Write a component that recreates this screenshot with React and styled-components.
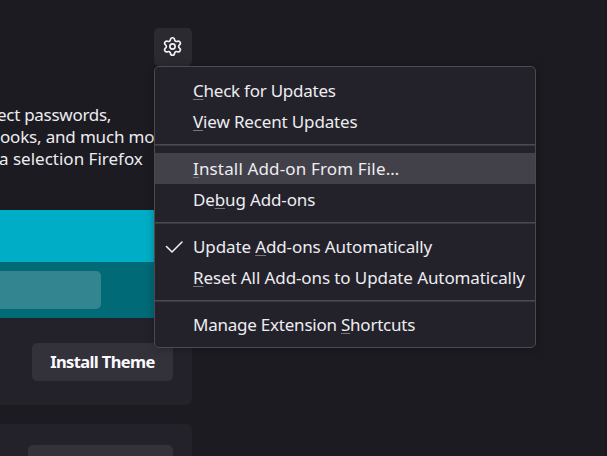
import React from "react";
import styled, { createGlobalStyle, css } from "styled-components";
import { Settings } from "lucide-react";

const GlobalStyle = createGlobalStyle`
  * { box-sizing: border-box; }
  body {
    margin: 0;
    background: #1c1b21;
    color: #ededf0;
    font-family: "Noto Sans", "Open Sans", sans-serif;
    overflow: hidden;
  }
`;

const Page = styled.main`
  position: relative;
  width: 607px;
  height: 456px;
  overflow: hidden;
  border-right: 2px solid #18171f;
`;

const Content = styled.div`
  width: 192px;
  height: 456px;
  display: flex;
  flex-direction: column;
  overflow: hidden;
`;

const GearButton = styled.button`
  align-self: flex-end;
  flex: none;
  width: 38px;
  height: 38px;
  margin-top: 28px;
  padding: 0 1px 1px 0;
  border: 0;
  border-radius: 5px;
  background: #2b2a31;
  color: #f2f2f5;
  display: grid;
  place-items: center;
`;

const Intro = styled.div`
  flex: none;
  margin-top: 38px;
  height: 106px;
`;

const IntroLine = styled.p`
  margin: 0 0 0 ${(p) => p.$shift}px;
  font-size: 17px;
  line-height: 22px;
  letter-spacing: ${(p) => p.$spacing || 0}px;
  white-space: nowrap;
`;

const Card = styled.section`
  flex: none;
  height: ${(p) => p.$height}px;
  margin-bottom: 19px;
  display: flex;
  flex-direction: column;
  align-items: flex-end;
  background: #23222b;
  border-radius: 0 6px 6px 0;
  overflow: hidden;
`;

const ThemePreview = styled.div`
  width: 100%;
  height: 108px;
  padding-top: 52px;
  background: #00adc6;
`;

const PreviewToolbar = styled.div`
  height: 56px;
  padding-top: 9px;
  background: #006a77;
`;

const PreviewField = styled.div`
  width: 101px;
  height: 38px;
  border-radius: 0 5px 5px 0;
  background: #33858f;
`;

const CardButton = styled.button`
  flex: none;
  width: ${(p) => p.$width}px;
  height: 38px;
  margin: ${(p) => p.$top}px 19px 0 0;
  padding: 0;
  border: 0;
  border-radius: 5px;
  background: #33323a;
  color: #fbfbfe;
  font: 700 16.5px/38px "Noto Sans", sans-serif;
  letter-spacing: -0.62px;
  white-space: nowrap;
`;

const Menu = styled.ul`
  position: absolute;
  left: 154px;
  top: 66px;
  width: 382px;
  height: 282px;
  margin: 0;
  padding: 8px 0 0;
  list-style: none;
  border: 1px solid #4b4a52;
  border-radius: 5px;
  background: #23222b;
  box-shadow: 0 1px 9px rgba(0, 0, 0, 0.28);
`;

const MenuItem = styled.li`
  height: 31.2px;
  display: grid;
  grid-template-columns: 38px 1fr;
  align-items: center;
  font-size: 17px;
  line-height: 31px;
  white-space: nowrap;
  letter-spacing: ${(p) => p.$spacing || 0}px;
  ${(p) => p.$active && css`background: #42414a;`}
`;

const Separator = styled.li`
  height: 1.6px;
  margin: 7px 0;
  background: linear-gradient(#4b4a52 1px, #393841 1px);
`;

const AccessKey = styled.span`
  text-decoration: underline 1px #77767d;
  text-underline-offset: 2px;
  text-decoration-skip-ink: none;
`;

const Check = styled.svg`
  display: block;
  margin-left: 10px;
`;

const groups = [
  [
    { text: ["", "C", "heck for Updates"], spacing: -0.24 },
    { text: ["", "V", "iew Recent Updates"], spacing: -0.15 },
  ],
  [
    { text: ["", "I", "nstall Add-on From File…"], spacing: 0.15, active: true },
    { text: ["De", "b", "ug Add-ons"], spacing: -0.14 },
  ],
  [
    { text: ["Update ", "A", "dd-ons Automatically"], spacing: -0.12, checked: true },
    { text: ["", "R", "eset All Add-ons to Update Automatically"], spacing: -0.1 },
  ],
  [{ text: ["Manage Extension ", "S", "hortcuts"], spacing: -0.23 }],
];

export default function App() {
  return (
    <>
      <GlobalStyle />
      <Page>
        <Content>
          <GearButton aria-label="Tools for all add-ons">
            <Settings size={21} strokeWidth={1.9} />
          </GearButton>
          <Intro>
            <IntroLine $shift={-3} $spacing={-0.28}>ect passwords,</IntroLine>
            <IntroLine $shift={0} $spacing={-0.18}>ooks, and much more</IntroLine>
            <IntroLine $shift={-1}>a selection Firefox</IntroLine>
          </Intro>
          <Card $height={195}>
            <ThemePreview>
              <PreviewToolbar>
                <PreviewField />
              </PreviewToolbar>
            </ThemePreview>
            <CardButton $width={141} $top={25}>Install Theme</CardButton>
          </Card>
          <Card $height={195}>
            <CardButton $width={145} $top={21} />
          </Card>
        </Content>
        <Menu>
          {groups.map((items, g) => (
            <React.Fragment key={g}>
              {g > 0 && <Separator />}
              {items.map(({ text, active, checked, spacing }) => (
                <MenuItem key={text.join("")} $active={active} $spacing={spacing}>
                  <span>
                    {checked && (
                      <Check width="18" height="14" viewBox="0 0 18 14" fill="none" stroke="#f2f2f5" strokeWidth="1.5" strokeLinecap="round" strokeLinejoin="round">
                        <path d="M1.5 6.5L7 12L17 2" />
                      </Check>
                    )}
                  </span>
                  <span>
                    {text[0]}
                    <AccessKey>{text[1]}</AccessKey>
                    {text[2]}
                  </span>
                </MenuItem>
              ))}
            </React.Fragment>
          ))}
        </Menu>
      </Page>
    </>
  );
}
